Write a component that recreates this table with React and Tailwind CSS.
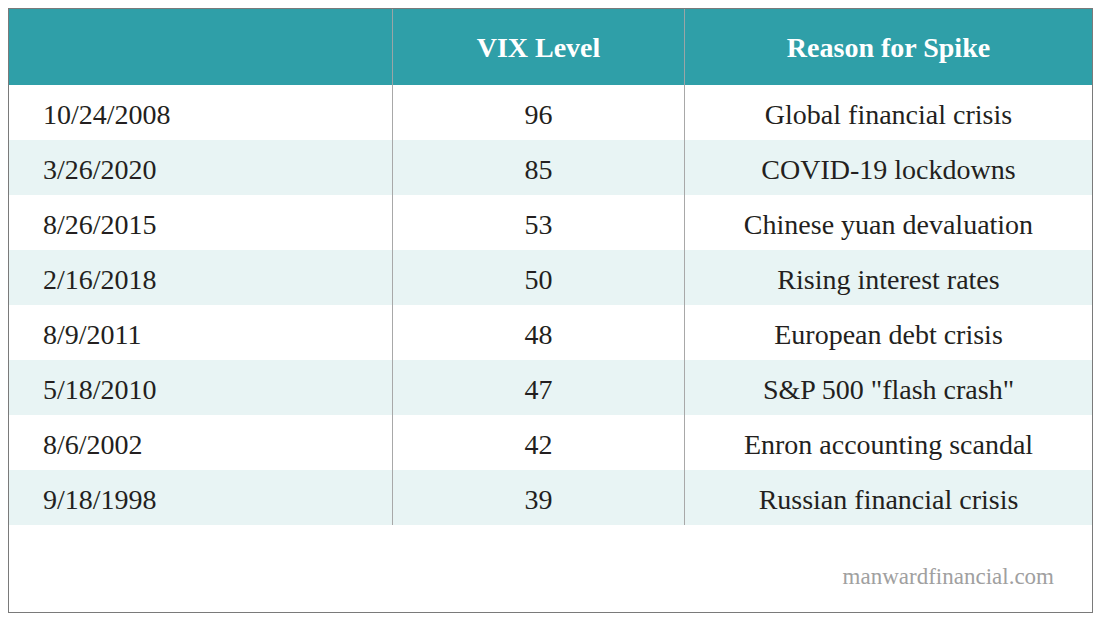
const rows = [
  ['10/24/2008', '96', 'Global financial crisis'],
  ['3/26/2020', '85', 'COVID-19 lockdowns'],
  ['8/26/2015', '53', 'Chinese yuan devaluation'],
  ['2/16/2018', '50', 'Rising interest rates'],
  ['8/9/2011', '48', 'European debt crisis'],
  ['5/18/2010', '47', 'S&P 500 "flash crash"'],
  ['8/6/2002', '42', 'Enron accounting scandal'],
  ['9/18/1998', '39', 'Russian financial crisis'],
]

export default function App() {
  return (
    <div className="w-[1100px] h-[622px] bg-white pt-2 pl-2" style={{ fontFamily: '"Liberation Serif", serif' }}>
      <div className="w-[1085px] h-[605px] border border-[#7a7a7a] flex flex-col">
        <div className="grid grid-cols-[384px_292px_1fr] h-[76px] bg-[#2f9fa8] text-white font-bold text-[28px]">
          <div className="border-r border-[#9aa5a6]" />
          <div className="border-r border-[#9aa5a6] flex items-center justify-center pt-[2px]">VIX Level</div>
          <div className="flex items-center justify-center pt-[2px]">Reason for Spike</div>
        </div>
        {rows.map((r, i) => (
          <div
            key={r[0]}
            className={'grid grid-cols-[384px_292px_1fr] h-[55px] text-[28px] text-[#231f20] ' + (i % 2 === 1 ? 'bg-[#e8f4f4]' : 'bg-white')}
          >
            <div className="border-r border-[#a8a8a8] flex items-center pl-[34px] pt-[5px]">{r[0]}</div>
            <div className="border-r border-[#a8a8a8] flex items-center justify-center pt-[5px]">{r[1]}</div>
            <div className="flex items-center justify-center pt-[5px]">{r[2]}</div>
          </div>
        ))}
        <div className="flex-1 flex items-center justify-end pr-[38px] pt-[18px] text-[23px] text-[#a0a0a0]">
          manwardfinancial.com
        </div>
      </div>
    </div>
  )
}
